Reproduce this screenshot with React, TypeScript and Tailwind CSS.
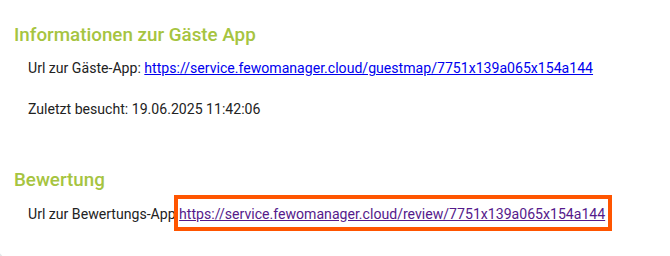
export default function App() {
    return (
        <div className="relative h-[256px] w-[670px] overflow-hidden bg-white font-['Roboto',sans-serif] text-[14.1px] text-[#222]">
            <div className="flex flex-col px-[14px] pt-[23px]">
                <h2 className="text-[18.8px] font-medium leading-[24px] text-[#a6c440]">Informationen zur Gäste App</h2>
                <p className="mt-[11px] pl-[14px] leading-[20px]">
                    Url zur Gäste-App:{" "}
                    <a href="#" className="text-[#0000ee] underline">
                        https://service.fewomanager.cloud/guestmap/7751x139a065x154a144
                    </a>
                </p>
                <p className="mt-[21px] pl-[14px] leading-[20px]">Zuletzt besucht: 19.06.2025 11:42:06</p>
                <h2 className="mt-[49px] text-[18.8px] font-medium leading-[24px] text-[#a6c440]">Bewertung</h2>
                <p className="mt-[12px] pl-[14px] leading-[20px]">
                    Url zur Bewertungs-App{" "}
                    <a href="#" className="relative text-[#551a8b] underline">
                        https://service.fewomanager.cloud/review/7751x139a065x154a144
                        <span className="absolute -left-[5px] -right-[7px] -top-[11px] -bottom-[9px] border-[4px] border-[#ff5500]" />
                    </a>
                </p>
            </div>
            <div className="absolute -bottom-[14px] -left-[14px] h-[18px] w-[18px] rounded-full border-[3px] border-[#e4e8ea]" />
        </div>
    );
}
